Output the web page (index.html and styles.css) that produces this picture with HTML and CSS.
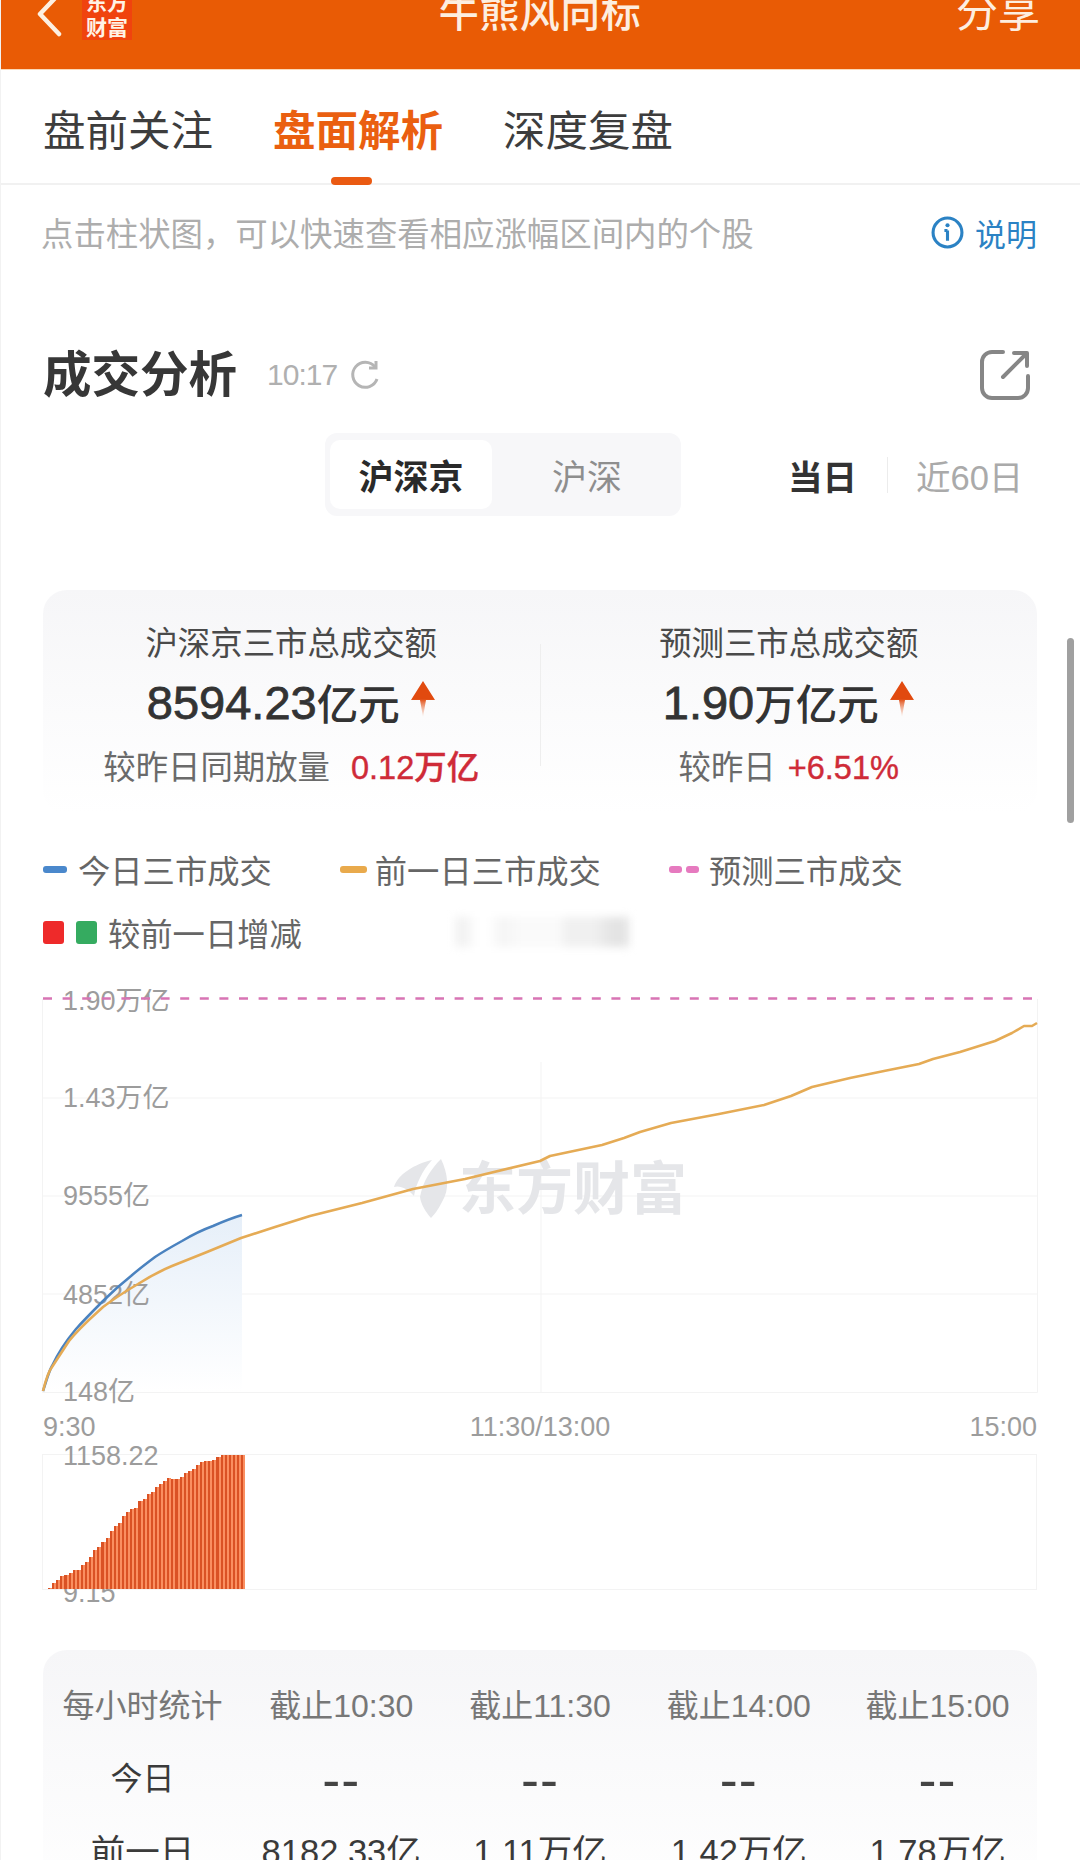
FILE: index.html
```html
<!DOCTYPE html>
<html lang="zh-CN">
<head>
<meta charset="utf-8">
<title>牛熊风向标</title>
<link rel="stylesheet" href="styles.css">
</head>
<body>
<div class="page">
  <header class="topbar">
    <div class="topbar-row">
      <div class="topbar-left">
        <svg class="back" viewBox="0 0 26 46" width="26" height="46"><path d="M23 3 L4 23 L23 43"/></svg>
        <div class="logo">东方<br>财富</div>
      </div>
      <div class="title">牛熊风向标</div>
      <div class="share">分享</div>
    </div>
  </header>

  <nav class="tabs">
    <div class="tab">盘前关注</div>
    <div class="tab tab-active">盘面解析<span class="tab-bar"></span></div>
    <div class="tab">深度复盘</div>
  </nav>

  <div class="hint">
    <div class="hint-text">点击柱状图，可以快速查看相应涨幅区间内的个股</div>
    <div class="explain">
      <svg class="info" viewBox="0 0 32 32" width="33" height="33"><circle cx="16" cy="16" r="14"/><path d="M16 14 V24 M13 14 H16"/><circle class="dot" cx="16" cy="9" r="2"/></svg>
      <span>说明</span>
    </div>
  </div>

  <section class="heading">
    <h2>成交分析</h2>
    <span class="time">10:17</span>
    <svg class="refresh" viewBox="0 0 30 32" width="30" height="32"><path d="M25 8 A12.5 12.5 0 1 0 27 20"/><path d="M26 2 V9 H19"/></svg>
    <svg class="export" viewBox="0 0 50 50" width="50" height="50"><path d="M23 2 H12 A10 10 0 0 0 2 12 V38 A10 10 0 0 0 12 48 H38 A10 10 0 0 0 48 38 V26"/><path d="M23 27 L46 4 M34 3 H47 V16"/></svg>
  </section>

  <div class="controls">
    <div class="segment">
      <div class="seg seg-active">沪深京</div>
      <div class="seg">沪深</div>
    </div>
    <div class="range">
      <span class="range-on">当日</span>
      <span class="range-sep"></span>
      <span class="range-off">近60日</span>
    </div>
  </div>

  <section class="stats">
    <div class="stat">
      <div class="stat-label">沪深京三市总成交额</div>
      <div class="stat-value"><span class="num">8594.23</span>亿元<svg class="up" viewBox="0 0 26 36" width="26" height="36"><use href="#arrow"/></svg></div>
      <div class="stat-sub">较昨日同期放量<em>0.12万亿</em></div>
    </div>
    <div class="stat-divider"></div>
    <div class="stat">
      <div class="stat-label">预测三市总成交额</div>
      <div class="stat-value"><span class="num">1.90</span>万亿元<svg class="up" viewBox="0 0 26 36" width="26" height="36"><use href="#arrow"/></svg></div>
      <div class="stat-sub">较昨日<em class="em-near">+6.51%</em></div>
    </div>
  </section>

  <svg class="defs" width="0" height="0">
    <defs>
      <linearGradient id="arrowFade" x1="0" y1="0" x2="0" y2="1">
        <stop offset="0.5" stop-color="#e14a0f"/>
        <stop offset="1" stop-color="#f3b79c" stop-opacity="0.2"/>
      </linearGradient>
      <linearGradient id="areaFade" x1="0" y1="0" x2="0" y2="1">
        <stop offset="0" stop-color="#e6eff9"/>
        <stop offset="1" stop-color="#ffffff"/>
      </linearGradient>
      <path id="arrow" d="M13 0 L25 19 H16 L13 36 L10 19 H1 Z" fill="url(#arrowFade)"/>
    </defs>
  </svg>

  <div class="legend">
    <div class="legend-item"><i class="sw sw-blue"></i>今日三市成交</div>
    <div class="legend-item"><i class="sw sw-orange"></i>前一日三市成交</div>
    <div class="legend-item"><i class="sw sw-pink"></i><i class="sw sw-pink sw-second"></i>预测三市成交</div>
  </div>
  <div class="legend legend-two">
    <div class="legend-item"><i class="sq sq-red"></i><i class="sq sq-green"></i>较前一日增减</div>
    <div class="smudge"></div>
  </div>

  <svg class="chart" viewBox="0 990 1080 455" width="1080" height="455">
    <g class="grid">
      <path d="M42.5 1000 V1393.5 H1037.5 V1000"/>
      <path d="M43 1099 H1037 M43 1197 H1037 M43 1295 H1037 M541 1063 V1393"/>
    </g>
    <g class="wm">
      <path class="wm-mark" d="M432 1161 C415 1165 398 1175 394 1188 C400 1186 408 1190 414 1197 C416 1185 422 1172 432 1161 Z"/>
      <path class="wm-mark" d="M441 1160 C448 1175 450 1190 442 1203 C438 1211 434 1216 431 1219 C425 1212 421 1205 420 1198 C423 1182 431 1170 441 1160 Z"/>
      <text class="wm-text" x="459" y="1210">东方财富</text>
    </g>
    <path class="area" d="M43 1392 C47 1380 49 1372 52 1367 C58 1354 66 1342 76 1330 C85 1320 94 1311 103 1302 C112 1293 121 1285 131 1277 C139 1270 147 1264 155 1258 C164 1252 173 1247 182 1242 C192 1236 202 1231 213 1227 C222 1223 232 1219 242 1216 V1393 H43 Z"/>
    <text class="axis" x="63" y="1011">1.90万亿</text>
    <text class="axis" x="63" y="1108">1.43万亿</text>
    <text class="axis" x="63" y="1206">9555亿</text>
    <text class="axis" x="63" y="1305">4852亿</text>
    <text class="axis" x="63" y="1402">148亿</text>
    <path class="dash" d="M43 999.5 H1037"/>
    <path class="line-blue" d="M43 1392 C47 1380 49 1372 52 1367 C58 1354 66 1342 76 1330 C85 1320 94 1311 103 1302 C112 1293 121 1285 131 1277 C139 1270 147 1264 155 1258 C164 1252 173 1247 182 1242 C192 1236 202 1231 213 1227 C222 1223 232 1219 242 1216"/>
    <path class="line-orange" d="M43 1392 C46 1380 48 1373 52 1368 L69 1342 C80 1328 92 1318 103 1308 C115 1299 126 1292 138 1285 C149 1278 160 1272 172 1267 L207 1253 L241 1239 L275 1228 L310 1217 L362 1204 L413 1190 L465 1180 L540 1162 L550 1157 L602 1146 L624 1139 L640 1133 L671 1124 L719 1115 L764 1106 L791 1097 L812 1088 L850 1079 L884 1072 L919 1065 L933 1060 L960 1053 L995 1042 L1012 1034 L1024 1027 L1032 1027 L1037 1024"/>
    <text class="axis" x="43" y="1437">9:30</text>
    <text class="axis axis-mid" x="540" y="1437">11:30/13:00</text>
    <text class="axis axis-end" x="1037" y="1437">15:00</text>
  </svg>

  <div class="vol">
    <span class="vol-label vol-top">1158.22</span>
    <span class="vol-label vol-bottom">9.15</span>
    <div class="bars">
      <i style="height:1px"></i><i style="height:6px"></i><i style="height:9px"></i><i style="height:13px"></i><i style="height:14px"></i><i style="height:16px"></i><i style="height:19px"></i><i style="height:19px"></i><i style="height:24px"></i><i style="height:27px"></i><i style="height:32px"></i><i style="height:39px"></i><i style="height:42px"></i><i style="height:47px"></i><i style="height:51px"></i><i style="height:58px"></i><i style="height:63px"></i><i style="height:66px"></i><i style="height:73px"></i><i style="height:77px"></i><i style="height:80px"></i><i style="height:81px"></i><i style="height:88px"></i><i style="height:90px"></i><i style="height:95px"></i><i style="height:97px"></i><i style="height:102px"></i><i style="height:105px"></i><i style="height:108px"></i><i style="height:111px"></i><i style="height:110px"></i><i style="height:110px"></i><i style="height:112px"></i><i style="height:116px"></i><i style="height:118px"></i><i style="height:120px"></i><i style="height:124px"></i><i style="height:127px"></i><i style="height:128px"></i><i style="height:128px"></i><i style="height:129px"></i><i style="height:132px"></i><i style="height:134px"></i><i style="height:134px"></i><i style="height:134px"></i><i style="height:134px"></i><i style="height:134px"></i><i style="height:134px"></i>
    </div>
  </div>

  <section class="hours">
    <div class="hours-row hours-head"><div>每小时统计</div><div>截止10:30</div><div>截止11:30</div><div>截止14:00</div><div>截止15:00</div></div>
    <div class="hours-row"><div>今日</div><div class="nil">--</div><div class="nil">--</div><div class="nil">--</div><div class="nil">--</div></div>
    <div class="hours-row hours-last"><div>前一日</div><div>8182.33亿</div><div>1.11万亿</div><div>1.42万亿</div><div>1.78万亿</div></div>
  </section>

  <div class="scrollbar"></div>
</div>
</body>
</html>
```

FILE: styles.css
```css
* { box-sizing: border-box; }
html, body { margin: 0; padding: 0; background: #fff; }
body {
  font-family: "Liberation Sans", "Noto Sans CJK SC", sans-serif;
  color: #333;
}
.page {
  position: relative;
  width: 1080px;
  height: 1860px;
  overflow: hidden;
  background: #fff;
  border-left: 1px solid #f2f2f2;
}

/* top bar */
.topbar {
  height: 70px;
  background: #e95b05;
  border-bottom: 1px solid #fbd9b8;
  color: #fdeee0;
}
.topbar-row {
  display: grid;
  grid-template-columns: 1fr auto 1fr;
  align-items: start;
  height: 50px;
  padding: 0 40px 0 35px;
  transform: translateY(-19px);
}
.topbar-left { display: flex; align-items: flex-start; gap: 20px; }
.back { margin-top: 10px; fill: none; stroke: #fdf0e2; stroke-width: 4.5; stroke-linecap: round; stroke-linejoin: round; }
.logo {
  width: 50px;
  margin-top: 1px;
  padding-top: 8px;
  background: #f0430e;
  color: #fff2e6;
  font-size: 21px;
  font-weight: 700;
  line-height: 25px;
  text-align: center;
}
.title { font-size: 40px; font-weight: 500; letter-spacing: 0.5px; line-height: 50px; transform: translate(2px, 7px); }
.share { font-size: 42px; text-align: right; line-height: 50px; transform: translateY(7px); }

/* tabs */
.tabs {
  display: flex;
  gap: 60px;
  height: 115px;
  padding: 37px 0 0 42px;
  border-bottom: 2px solid #f1f1f1;
}
.tab {
  position: relative;
  font-size: 42.5px;
  line-height: 50px;
  height: 50px;
  color: #3d3d3d;
}
.tab-active { color: #ea5f10; font-weight: 700; }
.tab-bar {
  position: absolute;
  left: 58px;
  top: 70px;
  width: 41px;
  height: 8px;
  border-radius: 4px;
  background: #ea5a12;
}

/* hint */
.hint {
  display: flex;
  justify-content: space-between;
  align-items: center;
  height: 40px;
  margin-top: 26px;
  padding: 0 43px 0 40px;
}
.hint-text { font-size: 32.4px; color: #adadad; white-space: nowrap; }
.explain { display: flex; align-items: center; gap: 11px; margin-top: 3px; font-size: 31px; color: #2b82c4; }
.info { fill: none; stroke: #2b82c4; stroke-width: 3; }
.info .dot { fill: #2b82c4; stroke: none; }

/* heading */
.heading {
  display: flex;
  align-items: center;
  height: 60px;
  margin-top: 94px;
  padding: 0 50px 0 42px;
}
.heading h2 { margin: 0; font-size: 48.5px; font-weight: 700; line-height: 60px; color: #373737; }
.time { margin-left: 30px; font-size: 30px; letter-spacing: -1px; color: #b0b0b0; }
.refresh { margin-left: 13px; fill: none; stroke: #b5b5b5; stroke-width: 3; }
.export { margin-left: auto; fill: none; stroke: #868686; stroke-width: 4; stroke-linecap: round; stroke-linejoin: round; }

/* controls */
.controls {
  display: flex;
  align-items: center;
  height: 83px;
  margin-top: 28px;
  padding-left: 324px;
}
.segment {
  display: flex;
  width: 356px;
  height: 83px;
  padding: 7px 7px 7px 5px;
  background: #f7f7f9;
  border-radius: 12px;
}
.seg {
  flex: 1;
  display: flex;
  align-items: center;
  justify-content: center;
  font-size: 35px;
  color: #8e8e8e;
  border-radius: 10px;
  padding-left: 8px;
}
.seg-active { flex: 0 0 162px; padding-left: 0; background: #fff; color: #2a2a2a; font-weight: 700; }
.range { display: flex; align-items: center; margin-left: 107px; font-size: 34.5px; }
.range-on { font-weight: 700; color: #333; }
.range-sep { width: 1px; height: 36px; margin: 0 28px 0 30px; background: #ececec; }
.range-off { color: #aaa; }

/* stats */
.stats {
  display: flex;
  align-items: center;
  width: 994px;
  height: 224px;
  margin: 74px 0 0 42px;
  border-radius: 24px;
  background: linear-gradient(#f6f6f8, #ffffff);
}
.stat { flex: 1; display: flex; flex-direction: column; align-items: center; padding-top: 8px; }
.stat-divider { width: 1px; height: 122px; background: #eeeeee; margin-top: 6px; }
.stat-label { font-size: 32.4px; line-height: 40px; color: #4a4a4a; white-space: nowrap; }
.stat-value {
  display: flex;
  align-items: center;
  height: 60px;
  margin-top: 8px;
  font-size: 41.5px;
  font-weight: 500;
  color: #333;
}
.num { font-size: 47px; font-weight: 400; -webkit-text-stroke: 0.8px #333; }
.up { margin: -6px 0 0 10px; }
.stat-sub { margin-top: 16px; font-size: 32.4px; line-height: 40px; color: #6a6a6a; white-space: nowrap; }
.stat-sub em { margin-left: 21px; font-style: normal; font-weight: 500; font-size: 32.5px; color: #cf2b38; -webkit-text-stroke: 0.4px #cf2b38; }
.stat-sub .em-near { margin-left: 12px; }

.defs { position: absolute; }

/* legend */
.legend {
  display: flex;
  align-items: center;
  gap: 68px;
  height: 40px;
  margin-top: 35px;
  padding-left: 42px;
}
.legend-two { gap: 0; margin-top: 23px; }
.legend-item { display: flex; align-items: center; font-size: 32.3px; color: #666; white-space: nowrap; }
.sw { display: block; width: 24px; height: 7px; margin-right: 11px; border-radius: 3px; }
.sw-blue { background: #4a88cc; }
.sw-orange { width: 27px; margin-right: 8px; background: #e9aa4c; }
.sw-pink { width: 13px; margin-right: 4px; background: #e67abf; }
.sw-second { margin-right: 10px; }
.sq { display: block; width: 21px; height: 23px; margin-right: 12px; border-radius: 3px; }
.sq-red { background: #ee2a2a; }
.sq-green { margin-right: 11px; background: #35ab60; }
.smudge {
  width: 174px;
  height: 30px;
  margin-left: 153px;
  background: linear-gradient(90deg, #f2f2f2 0 6%, #fff 12% 20%, #f6f6f6 25% 30%, #fafafa 38% 60%, #f0f0f0 64% 80%, #e4e4e4 90% 100%);
  filter: blur(4px);
}

/* main chart */
.chart { display: block; margin: 37px 0 0 -1px; }
.grid path { fill: none; stroke: #f3f3f3; stroke-width: 1; }
.wm-mark { fill: #e5e6e9; }
.wm-text { font-size: 57px; font-weight: 700; fill: #e5e6e9; }
.area { fill: url(#areaFade); }
.axis { font-size: 27px; fill: #9c9c9c; }
.axis-mid { text-anchor: middle; }
.axis-end { text-anchor: end; }
.dash { fill: none; stroke: #d874b4; stroke-width: 2.5; stroke-dasharray: 9 10.6; }
.line-blue { fill: none; stroke: #4a82bf; stroke-width: 2.5; }
.line-orange { fill: none; stroke: #e5ab55; stroke-width: 2.6; stroke-linejoin: round; }

/* volume chart */
.vol {
  position: relative;
  width: 995px;
  height: 136px;
  margin: 10px 0 0 41px;
  border: 1px solid #f3f3f3;
}
.vol-label { position: absolute; left: 20px; font-size: 27px; line-height: 30px; color: #9c9c9c; }
.vol-top { top: -14px; }
.vol-bottom { top: 123px; }
.bars {
  position: relative;
  display: flex;
  align-items: flex-end;
  height: 134px;
  padding-left: 5px;
}
.bars i {
  display: block;
  width: 4.12px;
  flex: none;
  background: linear-gradient(90deg, #da5224 0 62%, #fa8f60 62% 100%);
}

/* hours */
.hours {
  width: 994px;
  height: 260px;
  margin: 60px 0 0 42px;
  padding-top: 37px;
  border-radius: 24px;
  background: linear-gradient(#f6f6f8, #ffffff);
}
.hours-row {
  display: grid;
  grid-template-columns: repeat(5, 1fr);
  height: 73px;
  font-size: 32px;
  line-height: 38px;
  text-align: center;
  color: #3a3a3a;
  white-space: nowrap;
}
.hours-head { color: #777; }
.hours-last { font-size: 34.5px; }
.nil { font-size: 54px; letter-spacing: 1px; color: #444; }

.scrollbar {
  position: absolute;
  left: 1066px;
  top: 638px;
  width: 7px;
  height: 185px;
  border-radius: 4px;
  background: #a0a0a0;
}
```
